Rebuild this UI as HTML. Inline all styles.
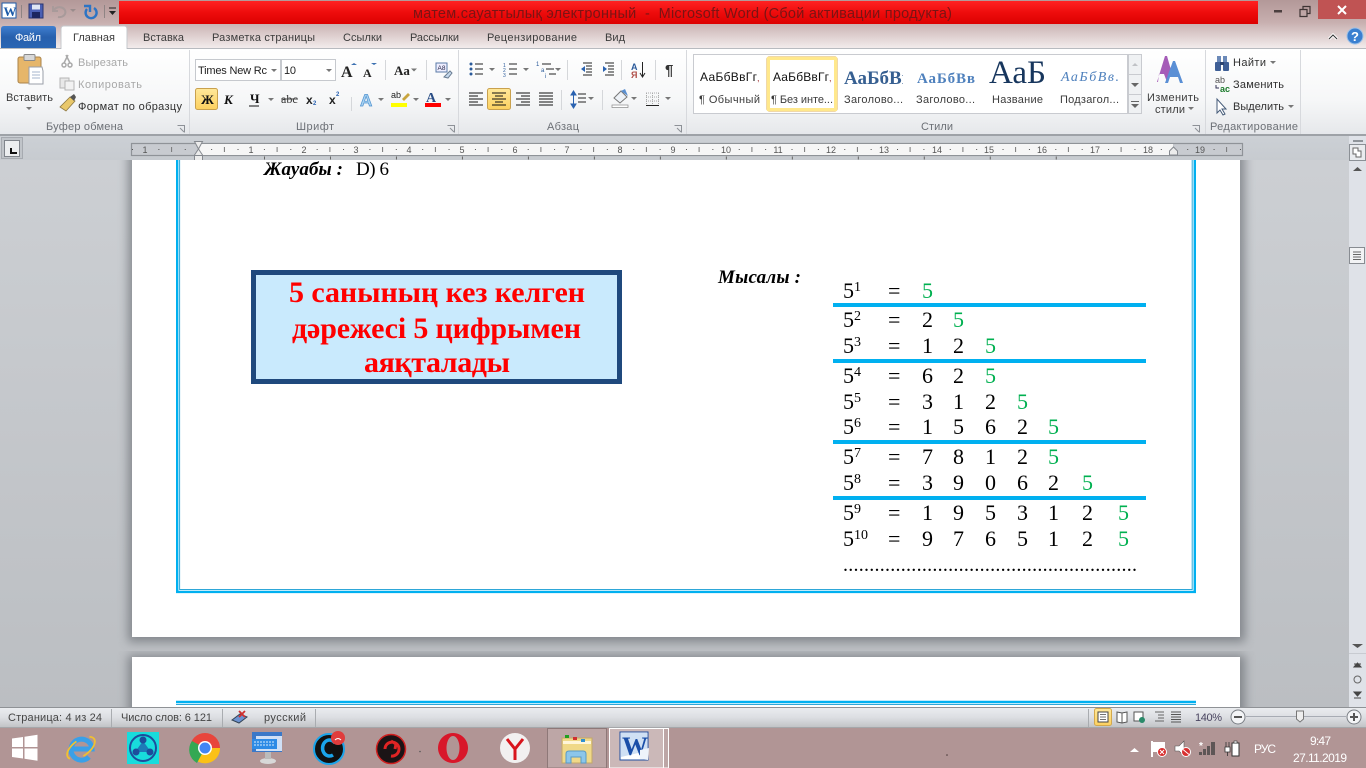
<!DOCTYPE html>
<html lang="ru"><head><meta charset="utf-8"><title>Word</title>
<style>
html,body{margin:0;padding:0;width:1366px;height:768px;overflow:hidden;background:#bcbfc3}
svg{display:block}
text{font-family:"Liberation Sans",sans-serif;font-size:11px;fill:#3b3b3b}
.s{font-family:"Liberation Serif",serif}
.n{font-family:"Liberation Serif",serif;font-size:22px;fill:#000}
.g{font-family:"Liberation Serif",serif;font-size:22px;fill:#00b050}
.u{font-family:"Liberation Serif",serif;font-size:14px;fill:#000}
.gr{fill:#6c7076}
.r{font-family:"Liberation Sans",sans-serif;font-size:9px;fill:#555}
.w{fill:#fff}
</style></head><body>
<svg width="1366" height="768" viewBox="0 0 1366 768" xmlns="http://www.w3.org/2000/svg">
<defs>
<linearGradient id="top" x1="0" y1="0" x2="0" y2="1"><stop offset="0" stop-color="#b39898"/><stop offset=".45" stop-color="#c7afaf"/><stop offset="1" stop-color="#f4eeee"/></linearGradient>
<linearGradient id="red" x1="0" y1="0" x2="0" y2="1"><stop offset="0" stop-color="#ff2222"/><stop offset=".5" stop-color="#ee0c0c"/><stop offset="1" stop-color="#dc0000"/></linearGradient>
<linearGradient id="rib" x1="0" y1="0" x2="0" y2="1"><stop offset="0" stop-color="#ffffff"/><stop offset=".6" stop-color="#f6f7f8"/><stop offset="1" stop-color="#e6e8eb"/></linearGradient>
<linearGradient id="file" x1="0" y1="0" x2="0" y2="1"><stop offset="0" stop-color="#3f7fd0"/><stop offset=".5" stop-color="#2860ad"/><stop offset="1" stop-color="#2a66b4"/></linearGradient>
<linearGradient id="doc" x1="0" y1="0" x2="0" y2="1"><stop offset="0" stop-color="#cdd0d4"/><stop offset="1" stop-color="#bbbec2"/></linearGradient>
<linearGradient id="stat" x1="0" y1="0" x2="0" y2="1"><stop offset="0" stop-color="#eceef1"/><stop offset=".5" stop-color="#dcdee2"/><stop offset="1" stop-color="#bfc1c4"/></linearGradient>
<linearGradient id="gold" x1="0" y1="0" x2="0" y2="1"><stop offset="0" stop-color="#ffe89a"/><stop offset="1" stop-color="#fdd15f"/></linearGradient>
<linearGradient id="rl" x1="0" y1="0" x2="0" y2="1"><stop offset="0" stop-color="#ccd0d5"/><stop offset="1" stop-color="#c7cbd0"/></linearGradient>
<filter id="sh" x="-5%" y="-5%" width="110%" height="110%"><feGaussianBlur stdDeviation="5"/></filter>
<clipPath id="dc"><rect x="0" y="160" width="1349" height="547"/></clipPath>
<clipPath id="h1"><rect x="840" y="60" width="63" height="30"/></clipPath>
<clipPath id="h2"><rect x="988" y="55" width="58" height="34"/></clipPath>
</defs>

<!-- top frame -->
<rect x="0" y="0" width="1366" height="49" fill="url(#top)"/>
<rect x="119" y="1" width="1139" height="23" fill="url(#red)"/>
<text x="413" y="18" style="font-size:14.5px;fill:#7a1414" textLength="539" xml:space="preserve">матем.сауаттылық электронный  -  Microsoft Word (Сбой активации продукта)</text>

<!-- QAT -->
<rect x="2" y="3" width="14" height="15" fill="#fff" stroke="#1d5aa8"/>
<text x="3.500" y="16" style="font-size:13px;font-weight:bold;fill:#1d5aa8" class="s">W</text>
<path d="M21.500 5v13M104.500 5v13" stroke="#8f8484"/>
<rect x="29" y="4" width="14" height="14" fill="#4a5fb4" stroke="#2a3470"/><rect x="32" y="4.500" width="8" height="5" fill="#dfe6f5"/><rect x="32" y="12" width="8" height="6" fill="#1c2660"/>
<path d="M54 10a6 5 0 1 1 4 7M53 6v5h5" fill="none" stroke="#a89a9a" stroke-width="2"/>
<path d="M70 9l3 3 3-3z" fill="#9a8c8c"/>
<path d="M94 8a5.500 5.500 0 1 1-7 1M84 6h6v6" fill="none" stroke="#2d74c4" stroke-width="2.400"/>
<path d="M109 8h7" stroke="#222"/><path d="M109 11h7l-3.500 4z" fill="#222"/>

<!-- window controls -->
<rect x="1318" y="0" width="48" height="19" fill="#c05353"/>
<rect x="1274" y="10" width="8" height="2.500" fill="#4b3f3f"/>
<path d="M1300 9.500h7v7h-7zM1303 9V6.500h7v7h-2.500" fill="none" stroke="#3e3434" stroke-width="1.200"/>
<path d="M1338 6l8 8M1346 6l-8 8" stroke="#fff" stroke-width="2"/>
<path d="M1329 39l4-4 4 4" fill="none" stroke="#fff" stroke-width="3"/><path d="M1329 39l4-4 4 4" fill="none" stroke="#333" stroke-width="1"/>
<circle cx="1355" cy="36" r="8" fill="#3a7fd0" stroke="#9bc0e8"/><text x="1351" y="41" style="font-size:13px;font-weight:bold;fill:#fff">?</text>

<!-- tabs -->
<path d="M1 48V29q0-3 3-3h49q3 0 3 3v19z" fill="url(#file)"/>
<text x="15" y="41" style="font-size:11px;fill:#fff" textLength="26">Файл</text>
<path d="M61 49V29q0-3 3-3h60q3 0 3 3v20z" fill="#fff" stroke="#c6c8cc"/>
<text x="73" y="41" textLength="42">Главная</text>
<text x="143" y="41" textLength="41">Вставка</text>
<text x="212" y="41" textLength="103">Разметка страницы</text>
<text x="343" y="41" textLength="39">Ссылки</text>
<text x="410" y="41" textLength="49">Рассылки</text>
<text x="487" y="41" textLength="90">Рецензирование</text>
<text x="605" y="41" textLength="20">Вид</text>

<!-- ribbon -->
<rect x="0" y="49" width="1366" height="85" fill="url(#rib)"/>
<path d="M0 48.500H61M127 48.500H1366" stroke="#b8bbc0"/>
<rect x="61.500" y="47" width="65" height="3" fill="#fff"/>
<rect x="0" y="134" width="1366" height="2" fill="#9ea2a7"/>
<path d="M189.500 50v84M458.500 50v84M686.500 50v84M1205.500 50v84M1300.500 50v84" stroke="#d7d9dd"/>

<!-- clipboard -->
<rect x="18" y="57" width="23" height="26" rx="2" fill="#e6b66a" stroke="#a9834a"/>
<rect x="24" y="54.500" width="11" height="6" rx="1" fill="#d8d8d8" stroke="#8a8a8a"/>
<path d="M29 67h13l1 4v13H29z" fill="#fff" stroke="#9a9fa8"/>
<path d="M32 72h8M32 75h8M32 78h8" stroke="#a4b4cc"/>
<text x="6" y="101" textLength="47">Вставить</text>
<path d="M26 107h6l-3 3z" fill="#777"/>
<circle cx="64" cy="65" r="2" fill="none" stroke="#aaa" stroke-width="1.500"/><circle cx="70" cy="65" r="2" fill="none" stroke="#aaa" stroke-width="1.500"/><path d="M64 63l4-8M70 63l-4-8" stroke="#aaa" stroke-width="1.500"/>
<text x="78" y="66" style="fill:#a8a8a8" textLength="50">Вырезать</text>
<rect x="60" y="78" width="9" height="10" fill="#e8e8e8" stroke="#b5b5b5"/><rect x="65" y="81" width="9" height="9" fill="#f2f2f2" stroke="#b5b5b5"/>
<text x="78" y="88" style="fill:#a8a8a8" textLength="64">Копировать</text>
<path d="M60 107l6 4 9-10-5-4z" fill="#e9c86b" stroke="#8f7a45" stroke-width=".8"/><path d="M70 97l4-3 2 3-2 4z" fill="#555"/>
<text x="78" y="110" style="fill:#303030" textLength="104">Формат по образцу</text>
<text x="46" y="130" class="gr" textLength="77">Буфер обмена</text>
<path d="M177.500 125.500h7v7M180 128l4 4" fill="none" stroke="#8d9197"/>

<!-- font -->
<rect x="195.500" y="59.500" width="85" height="21" fill="#fff" stroke="#c6c9ce"/>
<rect x="281.500" y="59.500" width="54" height="21" fill="#fff" stroke="#c6c9ce"/>
<text x="198" y="74" style="fill:#222" textLength="69">Times New Rc</text>
<path d="M271 69h6l-3 3z" fill="#777"/>
<text x="284" y="74" style="fill:#222" textLength="12">10</text>
<path d="M326 69h6l-3 3z" fill="#777"/>
<text x="341" y="77" class="s" style="font-size:16px;font-weight:bold;fill:#222">A</text><path d="M351 65l3-2 3 2z" fill="#3a6fb0"/>
<text x="363" y="77" class="s" style="font-size:12px;font-weight:bold;fill:#222">A</text><path d="M371 63l3 2 3-2z" fill="#3a6fb0"/>
<path d="M385.500 60v20M426.500 60v20M351.500 97v14" stroke="#d5d7da"/>
<text x="394" y="75" class="s" style="font-size:13px;font-weight:bold;fill:#222">Aa</text><path d="M411 68.500h6l-3 3z" fill="#777"/>
<rect x="436" y="63" width="11" height="9" fill="#eef" stroke="#5a7aa6"/><text x="437.500" y="70" style="font-size:6.500px;fill:#224">A8</text><path d="M444 77l6-6 2 2-4 5z" fill="#c5d8ec" stroke="#6a7c92"/>

<rect x="195.500" y="88.500" width="22" height="21" rx="2" fill="url(#gold)" stroke="#c9a14e"/>
<text x="201" y="104" class="s" style="font-size:13px;font-weight:bold;fill:#111">Ж</text>
<text x="224" y="104" class="s" style="font-size:13px;font-weight:bold;font-style:italic;fill:#111">К</text>
<text x="250" y="103" class="s" style="font-size:13px;font-weight:bold;fill:#111">Ч</text><path d="M249 106h10" stroke="#111"/>
<path d="M268 98h6l-3 3z" fill="#777"/>
<text x="281" y="103" class="s" style="font-size:12px;fill:#333">abc</text><path d="M281 99h17" stroke="#444"/>
<text x="306" y="104" style="font-size:12px;font-weight:bold;fill:#222">x</text><text x="313" y="105" style="font-size:6px;font-weight:bold;fill:#2a62b0">2</text>
<text x="329" y="104" style="font-size:12px;font-weight:bold;fill:#222">x</text><text x="336" y="96" style="font-size:6px;font-weight:bold;fill:#2a62b0">2</text>
<text x="360" y="106" style="font-size:17px;font-weight:bold;fill:#a9d3f2;stroke:#4f92d0;stroke-width:.7">A</text><path d="M378 98h6l-3 3z" fill="#777"/>
<text x="391" y="98" style="font-size:9px;fill:#222">ab</text><path d="M402 99l6-6 2 2-6 6z" fill="#c8a43e"/><rect x="391" y="103" width="16" height="4" fill="#ffff00"/>
<path d="M413 98h6l-3 3z" fill="#777"/>
<text x="426" y="102" class="s" style="font-size:14px;font-weight:bold;fill:#2a4e86">A</text><rect x="425" y="103" width="16" height="4" fill="#ff0000"/>
<path d="M445 98h6l-3 3z" fill="#777"/>
<text x="296" y="130" class="gr" textLength="38">Шрифт</text>
<path d="M447.500 125.500h7v7M450 128l4 4" fill="none" stroke="#8d9197"/>

<!-- paragraph -->
<g fill="#2a5a9a"><circle cx="471" cy="64" r="1.500"/><circle cx="471" cy="69" r="1.500"/><circle cx="471" cy="74" r="1.500"/></g>
<path d="M475 64h8M475 69h8M475 74h8M509 64h8M509 69h8M509 74h8M542 64h9M546 69h8M549 74h7" stroke="#222"/>
<text x="503" y="67" style="font-size:5px;fill:#2a5a9a">1</text><text x="503" y="72" style="font-size:5px;fill:#2a5a9a">2</text><text x="503" y="77" style="font-size:5px;fill:#2a5a9a">3</text>
<text x="536" y="66" style="font-size:6px;fill:#2a5a9a">1</text><text x="541" y="72" style="font-size:6px;fill:#2a5a9a">a</text><text x="545" y="78" style="font-size:6px;fill:#2a5a9a">i</text>
<path d="M489 68h6l-3 3zM523 68h6l-3 3zM555 68h6l-3 3z" fill="#777"/>
<path d="M567.500 60v20M621.500 60v20M655.500 60v20M561.500 90v20M602.500 90v20" stroke="#d5d7da"/>
<path d="M583 63h9M586 66h6M586 69h6M586 72h6M583 75h9M605 63h9M608 66h6M608 69h6M608 72h6M605 75h9" stroke="#222"/>
<path d="M581 69l4-3v6zM603 69l0-3 4 3-4 3z" fill="#2a62b0"/>
<text x="631" y="70" style="font-size:9px;font-weight:bold;fill:#2a5a9a">A</text><text x="631" y="78" style="font-size:9px;font-weight:bold;fill:#b0504a">Я</text>
<path d="M642.500 62v14M640 73l2.500 4 2.500-4" fill="none" stroke="#222"/>
<text x="665" y="75" style="font-size:15px;font-weight:bold;fill:#333">¶</text>

<path d="M469 93h14M469 96h9M469 99h14M469 102h9M469 105h14" stroke="#111"/>
<rect x="487.500" y="88.500" width="23" height="21" rx="2" fill="url(#gold)" stroke="#c9a14e"/>
<path d="M492 93h14M495 96h8M492 99h14M495 102h8M492 105h14" stroke="#111"/>
<path d="M516 93h14M521 96h9M516 99h14M521 102h9M516 105h14" stroke="#111"/>
<path d="M539 93h14M539 96h14M539 99h14M539 102h14M539 105h14" stroke="#111"/>
<path d="M573.500 93v13M571 95l2.500-4 2.500 4zM571 104l2.500 4 2.500-4z" fill="#2a62b0" stroke="#2a62b0"/>
<path d="M578 94h8M578 98h8M578 102h8" stroke="#222"/>
<path d="M588 97h6l-3 3z" fill="#777"/>
<path d="M614 98l7-7 6 6-7 6z" fill="#eef2f7" stroke="#777"/><path d="M621 91l4-2 3 7z" fill="#5a8fd0"/><rect x="612" y="105" width="16" height="2.500" fill="#fff" stroke="#888" stroke-width=".7"/>
<path d="M631 97h6l-3 3z" fill="#777"/>
<path d="M646 93h13M646 97h13M646 101h13M646.500 93v12M652.500 93v12M658.500 93v12" stroke="#aaa" stroke-dasharray="1 1"/><path d="M646 105.500h13" stroke="#222"/>
<path d="M665 97h6l-3 3z" fill="#777"/>
<text x="547" y="130" class="gr" textLength="32">Абзац</text>
<path d="M674.500 125.500h7v7M677 128l4 4" fill="none" stroke="#8d9197"/>

<!-- styles -->
<rect x="693.500" y="54.500" width="434" height="59" fill="#fff" stroke="#c9cbd0"/>
<rect x="767" y="57" width="70" height="54" rx="2" fill="#fff" stroke="#e0b050" />
<rect x="768.500" y="58.500" width="67" height="51" fill="none" stroke="#ffe88c" stroke-width="3"/>
<text x="700" y="81" style="font-size:12px;fill:#111" textLength="57">АаБбВвГг</text><text x="757" y="81" style="font-size:9px;fill:#a03030">,</text>
<text x="773" y="81" style="font-size:12px;fill:#111" textLength="56">АаБбВвГг</text><text x="829" y="81" style="font-size:9px;fill:#a03030">,</text>
<text x="699" y="103" textLength="61">¶ Обычный</text>
<text x="771" y="103" textLength="62">¶ Без инте...</text>
<text x="844" y="103" textLength="59">Заголово...</text>
<text x="916" y="103" textLength="59">Заголово...</text>
<text x="992" y="103" textLength="51">Название</text>
<text x="1060" y="103" textLength="59">Подзагол...</text>
<g clip-path="url(#h1)"><text x="844" y="84" class="s" style="font-size:19px;font-weight:bold;fill:#365f91">АаБбВв</text></g>
<text x="917" y="83" class="s" style="font-size:15px;font-weight:bold;fill:#4f81bd" textLength="58">АаБбВв</text>
<g clip-path="url(#h2)"><text x="989" y="83" class="s" style="font-size:33px;fill:#17365d">АаБ</text></g>
<text x="1061" y="81" class="s" style="font-size:14px;font-style:italic;fill:#4f81bd" textLength="58">АаБбВв.</text>
<rect x="1128.500" y="54.500" width="13" height="59" fill="#eff1f3" stroke="#c9cbd0"/>
<path d="M1128 74.500h14M1128 94.500h14" stroke="#c9cbd0"/>
<path d="M1132 66l3-3 3 3z" fill="#c0c2c6"/><path d="M1131 83h8l-4 4z" fill="#666"/>
<path d="M1131 101.500h8" stroke="#666"/><path d="M1131 104h8l-4 4z" fill="#666"/>
<path d="M1157 82l8-26 2 0 4 14-4 12-3-8h-5l-1 8z" fill="#a55cb8"/>
<path d="M1165 83l8-22h2l8 22h-3l-2-6h-8l-2 6z" fill="#5a8fd5"/>
<text x="1147" y="101" textLength="52">Изменить</text>
<text x="1155" y="113" textLength="30">стили</text>
<path d="M1188 107h6l-3 3z" fill="#777"/>
<text x="921" y="130" class="gr" textLength="32">Стили</text>
<path d="M1192.500 125.500h7v7M1195 128l4 4" fill="none" stroke="#8d9197"/>

<!-- editing -->
<rect x="1215" y="62" width="6" height="9" rx="1" fill="#3f5f96"/><rect x="1223" y="62" width="6" height="9" rx="1" fill="#3f5f96"/><rect x="1217" y="56" width="4" height="6" fill="#6b89b8"/><rect x="1223" y="56" width="4" height="6" fill="#6b89b8"/><rect x="1220" y="62" width="4" height="3" fill="#2c4470"/>
<text x="1233" y="66" style="fill:#303030" textLength="33">Найти</text><path d="M1270 61h6l-3 3z" fill="#777"/>
<text x="1215" y="83" style="font-size:9px;fill:#555">ab</text><text x="1220" y="92" style="font-size:9px;font-weight:bold;fill:#1a7a2a">ac</text><path d="M1216 85v3h3" fill="none" stroke="#335"/>
<text x="1233" y="88" style="fill:#303030" textLength="51">Заменить</text>
<path d="M1217 99v14l3-3 3 5 2-1-3-5h4z" fill="#fff" stroke="#445a78"/>
<text x="1233" y="110" style="fill:#303030" textLength="51">Выделить</text><path d="M1288 105h6l-3 3z" fill="#777"/>
<text x="1210" y="130" class="gr" textLength="88">Редактирование</text>

<!-- doc bg -->
<rect x="0" y="136" width="1366" height="572" fill="url(#doc)"/>
<!-- ruler -->
<rect x="0" y="136" width="1349" height="24" fill="url(#rl)"/>
<rect x="1.500" y="137.500" width="21" height="21" fill="#c0c4c9" stroke="#a6aab0"/>
<rect x="4.500" y="140.500" width="15" height="16" fill="#eceef0" stroke="#7f848b"/>
<path d="M11 148v5h6" fill="none" stroke="#111" stroke-width="2"/>
<rect x="131.500" y="143.500" width="1111" height="12" fill="#c8cbd0" stroke="#8f9398" stroke-width="1.200"/>
<rect x="198" y="144" width="975" height="11" fill="#f6f6f6"/>
<path d="M132 149.500H1242" stroke="#555" stroke-dasharray="1 25.380"/>
<path d="M224.400 147v5M277.100 147v5M329.900 147v5M382.600 147v5M435.400 147v5M488.100 147v5M540.900 147v5M593.600 147v5M646.400 147v5M699.100 147v5M751.900 147v5M804.600 147v5M857.400 147v5M910.100 147v5M962.900 147v5M1015.600 147v5M1068.400 147v5M1121.100 147v5M1173.900 147v5M1226.600 147v5M171.600 147v5" stroke="#777"/>
<path d="M264 158H1120" stroke="#666" stroke-width="3" stroke-dasharray="1 64.980"/>
<text class="r" x="145" y="153" text-anchor="middle">1</text>
<text class="r" x="251" y="153" text-anchor="middle">1</text><text class="r" x="304" y="153" text-anchor="middle">2</text><text class="r" x="356" y="153" text-anchor="middle">3</text><text class="r" x="409" y="153" text-anchor="middle">4</text><text class="r" x="462" y="153" text-anchor="middle">5</text><text class="r" x="515" y="153" text-anchor="middle">6</text><text class="r" x="567" y="153" text-anchor="middle">7</text><text class="r" x="620" y="153" text-anchor="middle">8</text><text class="r" x="673" y="153" text-anchor="middle">9</text><text class="r" x="726" y="153" text-anchor="middle">10</text><text class="r" x="778" y="153" text-anchor="middle">11</text><text class="r" x="831" y="153" text-anchor="middle">12</text><text class="r" x="884" y="153" text-anchor="middle">13</text><text class="r" x="937" y="153" text-anchor="middle">14</text><text class="r" x="989" y="153" text-anchor="middle">15</text><text class="r" x="1042" y="153" text-anchor="middle">16</text><text class="r" x="1095" y="153" text-anchor="middle">17</text><text class="r" x="1148" y="153" text-anchor="middle">18</text><text class="r" x="1200" y="153" text-anchor="middle">19</text>
<path d="M194.500 141.500h8l-4 7.500 4 6v6.500h-8V155l4-6z" fill="#ececec" stroke="#85898f"/><path d="M194.500 155.500h8" stroke="#85898f"/>
<path d="M1173.500 147l4 4v4h-8v-4z" fill="#ececec" stroke="#85898f"/>

<!-- pages -->
<g clip-path="url(#dc)">
<rect x="128" y="150" width="1117" height="492" fill="#5c6066" opacity=".6" filter="url(#sh)"/>
<rect x="128" y="655" width="1117" height="80" fill="#5c6066" opacity=".6" filter="url(#sh)"/>
<rect x="132" y="150" width="1108" height="487" fill="#fff"/>
<rect x="132" y="657" width="1108" height="80" fill="#fff"/>
<path d="M177.200 100V591.900H1194.800V100" fill="none" stroke="#00b0f0" stroke-width="2.400"/>
<path d="M179.600 100V589.500H1192.200V100" fill="none" stroke="#2ea7d8" stroke-width="1"/>
<path d="M176 702H1196" stroke="#00b0f0" stroke-width="2.400"/>
<path d="M176 704.500H1196" stroke="#2ea7d8" stroke-width="1"/>

<text x="264" y="175" class="s" style="font-size:19px;font-weight:bold;font-style:italic;fill:#000" textLength="79">Жауабы :</text>
<text x="356" y="175" class="s" style="font-size:19px;fill:#000" textLength="33">D) 6</text>
<text x="718" y="283" class="s" style="font-size:19px;font-weight:bold;font-style:italic;fill:#000" textLength="83">Мысалы :</text>

<rect x="253.500" y="272.500" width="366" height="109" fill="#c9eafd" stroke="#1f497d" stroke-width="5"/>
<text x="289" y="302" class="s" style="font-size:30px;font-weight:bold;fill:#ff0000" textLength="296">5 санының кез келген</text>
<text x="292" y="338" class="s" style="font-size:30px;font-weight:bold;fill:#ff0000" textLength="289">дәрежесі 5 цифрымен</text>
<text x="364" y="372" class="s" style="font-size:30px;font-weight:bold;fill:#ff0000" textLength="146">аяқталады</text>

<rect x="833" y="303" width="313" height="4" fill="#00b0f0"/>
<rect x="833" y="359" width="313" height="4" fill="#00b0f0"/>
<rect x="833" y="440" width="313" height="4" fill="#00b0f0"/>
<rect x="833" y="496" width="313" height="4" fill="#00b0f0"/>

<!-- rows -->
<text class="n" x="843" y="298">5</text><text class="u" x="854" y="291">1</text><text class="n" x="888" y="298">=</text><text class="g" x="922" y="298">5</text>

<text class="n" x="843" y="327">5</text><text class="u" x="854" y="320">2</text><text class="n" x="888" y="327">=</text><text class="n" x="922" y="327">2</text><text class="g" x="953" y="327">5</text>

<text class="n" x="843" y="353">5</text><text class="u" x="854" y="346">3</text><text class="n" x="888" y="353">=</text><text class="n" x="922" y="353">1</text><text class="n" x="953" y="353">2</text><text class="g" x="985" y="353">5</text>

<text class="n" x="843" y="383">5</text><text class="u" x="854" y="376">4</text><text class="n" x="888" y="383">=</text><text class="n" x="922" y="383">6</text><text class="n" x="953" y="383">2</text><text class="g" x="985" y="383">5</text>

<text class="n" x="843" y="409">5</text><text class="u" x="854" y="402">5</text><text class="n" x="888" y="409">=</text><text class="n" x="922" y="409">3</text><text class="n" x="953" y="409">1</text><text class="n" x="985" y="409">2</text><text class="g" x="1017" y="409">5</text>

<text class="n" x="843" y="434">5</text><text class="u" x="854" y="427">6</text><text class="n" x="888" y="434">=</text><text class="n" x="922" y="434">1</text><text class="n" x="953" y="434">5</text><text class="n" x="985" y="434">6</text><text class="n" x="1017" y="434">2</text><text class="g" x="1048" y="434">5</text>

<text class="n" x="843" y="464">5</text><text class="u" x="854" y="457">7</text><text class="n" x="888" y="464">=</text><text class="n" x="922" y="464">7</text><text class="n" x="953" y="464">8</text><text class="n" x="985" y="464">1</text><text class="n" x="1017" y="464">2</text><text class="g" x="1048" y="464">5</text>

<text class="n" x="843" y="490">5</text><text class="u" x="854" y="483">8</text><text class="n" x="888" y="490">=</text><text class="n" x="922" y="490">3</text><text class="n" x="953" y="490">9</text><text class="n" x="985" y="490">0</text><text class="n" x="1017" y="490">6</text><text class="n" x="1048" y="490">2</text><text class="g" x="1082" y="490">5</text>

<text class="n" x="843" y="520">5</text><text class="u" x="854" y="513">9</text><text class="n" x="888" y="520">=</text><text class="n" x="922" y="520">1</text><text class="n" x="953" y="520">9</text><text class="n" x="985" y="520">5</text><text class="n" x="1017" y="520">3</text><text class="n" x="1048" y="520">1</text><text class="n" x="1082" y="520">2</text><text class="g" x="1118" y="520">5</text>

<text class="n" x="843" y="546">5</text><text class="u" x="854" y="539">10</text><text class="n" x="888" y="546">=</text><text class="n" x="922" y="546">9</text><text class="n" x="953" y="546">7</text><text class="n" x="985" y="546">6</text><text class="n" x="1017" y="546">5</text><text class="n" x="1048" y="546">1</text><text class="n" x="1082" y="546">2</text><text class="g" x="1118" y="546">5</text>

<text class="s" x="843" y="571" style="font-size:20px;fill:#000" textLength="294">........................................................</text>
</g>

<!-- scrollbar -->
<rect x="1349" y="136" width="17" height="572" fill="#dfe2e8"/>
<rect x="1353" y="140" width="10" height="2" fill="#8f949a"/>
<rect x="1349.500" y="144.500" width="16" height="16" fill="#e9ebee" stroke="#8b9096"/>
<path d="M1353 148h5v3h3v6h-5v-3h-3z" fill="#fff" stroke="#666"/>
<path d="M1353 171l4.500-4 4.500 4z" fill="#555"/>
<rect x="1349.500" y="247.500" width="15" height="16" fill="#f2f3f5" stroke="#888c92"/>
<path d="M1353 252h8M1353 254.500h8M1353 257h8M1353 259.500h8" stroke="#666"/>
<path d="M1352 644h11l-5.500 4z" fill="#555"/>
<path d="M1349 653.500h17" stroke="#c8cbd1"/>
<path d="M1354 664h7M1354 667l3.500-4 3.500 4z" fill="#444" stroke="#444"/>
<circle cx="1357.500" cy="679.500" r="3.500" fill="none" stroke="#666"/>
<path d="M1354 698h7M1354 692l3.500 4 3.500-4z" fill="#444" stroke="#444"/>

<!-- status -->
<rect x="0" y="707" width="1366" height="21" fill="url(#stat)"/>
<path d="M0 707.500H1366" stroke="#8f9296"/>
<path d="M0 727.500H1366" stroke="#a5a7aa"/>
<path d="M111.500 709v18M222.500 709v18M315.500 709v18M1088.500 709v18" stroke="#a9acb0"/>
<text x="8" y="721" style="fill:#444" textLength="94">Страница: 4 из 24</text>
<text x="121" y="721" style="fill:#444" textLength="91">Число слов: 6 121</text>
<path d="M232 720l8-6 7 3-8 6z" fill="#6d92d0" stroke="#345"/><path d="M239 711l6 6M245 711l-6 6" stroke="#d03030" stroke-width="1.800"/>
<text x="264" y="721" style="fill:#444" textLength="42">русский</text>
<rect x="1094.500" y="708.500" width="17" height="17" rx="2" fill="url(#gold)" stroke="#d3a94e"/>
<rect x="1098" y="712" width="10" height="10" fill="#fff" stroke="#444"/><path d="M1100 714.500h6M1100 717h6M1100 719.500h6" stroke="#444" stroke-width=".8"/>
<path d="M1117 712l5 1 5-1v10l-5 1-5-1zM1122 713v10" fill="#fff" stroke="#555"/>
<rect x="1134" y="712" width="9" height="9" fill="#fff" stroke="#555"/><circle cx="1142" cy="720" r="3" fill="#2a8a6a"/>
<path d="M1155 712h9M1158 715h6M1158 718h6M1155 721h9" stroke="#666"/>
<path d="M1171 712h10M1171 714.500h10M1171 717h10M1171 719.500h10M1171 722h10" stroke="#555"/>
<text x="1195" y="721" style="font-size:11px;fill:#4a4560" textLength="27">140%</text>
<circle cx="1238" cy="717" r="7" fill="#f3f4f6" stroke="#7a7e84"/><path d="M1234 717h8" stroke="#555" stroke-width="2"/>
<path d="M1246 716.500H1346" stroke="#a8acb4"/>
<path d="M1296.500 711h7v8l-3.500 3-3.500-3z" fill="#eee" stroke="#777"/>
<circle cx="1354" cy="717" r="7" fill="#f3f4f6" stroke="#7a7e84"/><path d="M1350 717h8M1354 713v8" stroke="#555" stroke-width="2"/>

<!-- taskbar -->
<rect x="0" y="728" width="1366" height="40" fill="#b19595"/>
<path d="M12 738.500l11-1.500v10H12zM24.500 736.800l13-2v12.200h-13zM12 748.500h11v10l-11-1.500zM24.500 748.500h13v12.200l-13-2z" fill="#fff"/>
<path d="M71 749h21a10.500 10.500 0 1 0-3 8" fill="none" stroke="#3aa0e8" stroke-width="5"/>
<ellipse cx="81" cy="748" rx="16" ry="8" transform="rotate(-35 81 748)" fill="none" stroke="#f0c030" stroke-width="1.800" stroke-dasharray="22 14"/>
<rect x="127" y="732" width="32" height="32" fill="#18dcdc"/>
<circle cx="143" cy="748" r="13" fill="none" stroke="#1d4d9c" stroke-width="2"/>
<path d="M143 741l8 11h-16z" fill="#1d7ab8"/>
<circle cx="143" cy="740" r="3.500" fill="#1d4d9c"/><circle cx="136" cy="752" r="3.500" fill="#1d4d9c"/><circle cx="150" cy="752" r="3.500" fill="#1d4d9c"/>
<circle cx="205" cy="748" r="15" fill="#e8453c"/>
<path d="M205 748h15a15 15 0 0 1-23 13z" fill="#fbc116"/>
<path d="M192 741a15 15 0 0 0 5 22l8-15z" fill="#34a853"/>
<circle cx="205" cy="748" r="7" fill="#fff"/><circle cx="205" cy="748" r="5.500" fill="#4285f4"/>
<rect x="252" y="732" width="30" height="20" fill="#3a78c8"/><rect x="256" y="736" width="26" height="15" fill="#cfe0f6"/>
<rect x="252" y="739" width="25" height="10" fill="#2d8be6"/><path d="M254 742h21M254 745h21" stroke="#d8ecff" stroke-dasharray="2 1"/>
<ellipse cx="268" cy="761" rx="8" ry="3" fill="#d8d8d8"/><rect x="265" y="752" width="6" height="7" fill="#bbb"/>
<circle cx="329" cy="749" r="15" fill="#111" stroke="#1aa4ea" stroke-width="2"/>
<path d="M335 743a7 8 0 1 0-2 12" fill="none" stroke="#1aa4ea" stroke-width="3.500"/>
<circle cx="338" cy="738" r="7" fill="#e03c3c"/><path d="M335 740q3-3 6 0" fill="none" stroke="#fff"/>
<circle cx="391" cy="749" r="14.500" fill="#1b1416" stroke="#d02020" stroke-width="1.500"/>
<path d="M385 749a7 7 0 1 1 6 7M391 741l5 3-1 5" fill="none" stroke="#e02424" stroke-width="3"/>
<circle cx="420" cy="751.500" r=".8" fill="#555"/>
<path fill-rule="evenodd" d="M453 733a15 15 0 1 0 .01 0zM453 736a6.500 12 0 1 1-.01 0z" fill="#d8172a"/>
<circle cx="515" cy="748" r="15" fill="#f2f0f0"/><path d="M507 739l8 10 8-10M515 749v11" fill="none" stroke="#d8141c" stroke-width="3"/>
<rect x="547.500" y="728.500" width="59" height="39.500" fill="#bda6a6" stroke="#8e7878"/>
<rect x="609.500" y="728.500" width="54" height="39.500" fill="#cbb8b8" stroke="#fff"/>
<rect x="663.500" y="728.500" width="5" height="39.500" fill="#bda6a6" stroke="#fff"/>
<path d="M562 738h30v25h-30z" fill="#f0d988" stroke="#c2a868"/><rect x="563" y="741" width="28" height="3" fill="#fff6d8"/>
<rect x="565" y="735" width="4" height="3" fill="#20a020"/><rect x="573" y="737" width="4" height="3" fill="#d03030"/><rect x="581" y="739" width="4" height="3" fill="#3090d0"/>
<path d="M566 763v-9q0-3 3-3h14q3 0 3 3v9h-5v-6h-10v6z" fill="#8cc6ea" stroke="#5a9ac4"/>
<rect x="620" y="732" width="28" height="28" fill="#fff" stroke="#1f4ea0"/>
<path d="M621 733h26v18l-26 6z" fill="#cfe0f4"/>
<text x="622" y="755" class="s" style="font-size:26px;font-weight:bold;fill:#1a4ea8">W</text>
<path d="M640 750l9-2-1 12-8-1z" fill="#eef3fa"/>
<path d="M1130 752l4.500-4 4.500 4z" fill="#fff"/>
<path d="M1152 741v16" stroke="#fff" stroke-width="2"/><path d="M1153 742h12v10h-12z" fill="#fff"/>
<circle cx="1162" cy="752" r="4.500" fill="#d83030" stroke="#fff"/><path d="M1160 750l4 4M1164 750l-4 4" stroke="#fff"/>
<path d="M1175 746h4l5-5v15l-5-5h-4z" fill="#fff" stroke="#555" stroke-width=".6"/>
<circle cx="1186" cy="752" r="4.500" fill="#d83030" stroke="#fff"/><path d="M1183 749.500l6 5" stroke="#fff"/>
<path d="M1199 755h3v-3h-3zM1203 755h3v-6h-3zM1207 755h3v-9h-3zM1211 755h4v-13h-4z" fill="#5e5656"/>
<text x="1199" y="749" style="font-size:10px;font-weight:bold;fill:#fff">*</text>
<rect x="1232" y="743" width="7" height="13" fill="#fff" stroke="#333" stroke-width="1"/><rect x="1234" y="741" width="3" height="2" fill="#fff" stroke="#333" stroke-width=".6"/>
<path d="M1225 747h5v5h-5zM1227.500 752v4M1226 747v-5M1229 747v-5" fill="#fff" stroke="#333" stroke-width=".8"/>
<text x="1254" y="753" class="w" style="font-size:12px;fill:#fff" textLength="22">РУС</text>
<text x="1310" y="745" class="w" style="font-size:12px;fill:#fff" textLength="21">9:47</text>
<text x="1293" y="762" class="w" style="font-size:12px;fill:#fff" textLength="54">27.11.2019</text>
<circle cx="947" cy="755" r=".8" fill="#4a3a3a"/>
</svg>
</body></html>
